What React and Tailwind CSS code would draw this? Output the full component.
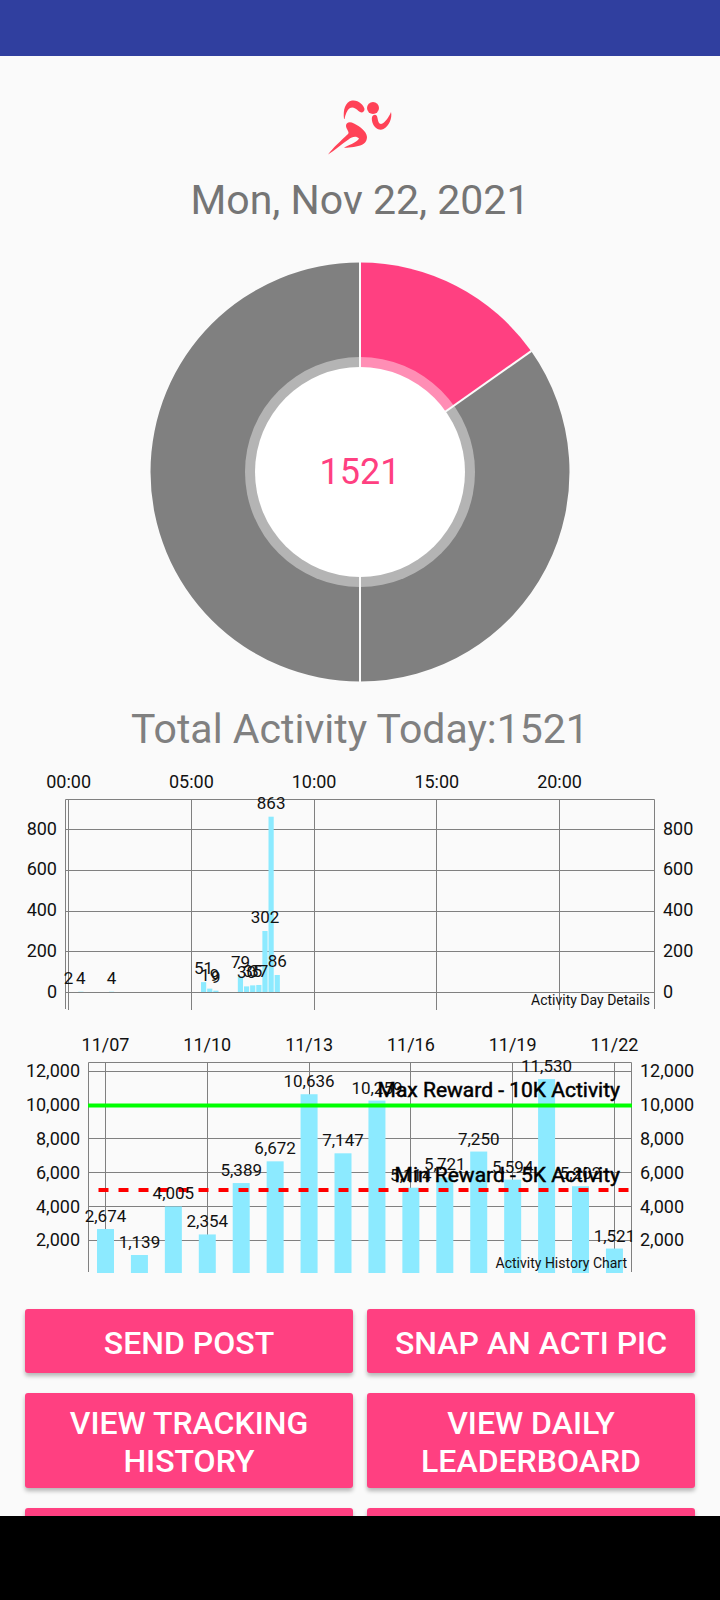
const INK = '#111111';
const GRID = '#808080';
const BAR = '#8ceaff';

const dayBars = [
  { slot: 0, value: 2 },
  { slot: 2, value: 4 },
  { slot: 7, value: 4 },
  { slot: 22, value: 51 },
  { slot: 23, value: 19 },
  { slot: 24, value: 9 },
  { slot: 28, value: 79 },
  { slot: 29, value: 30 },
  { slot: 30, value: 35 },
  { slot: 31, value: 37 },
  { slot: 32, value: 302 },
  { slot: 33, value: 863 },
  { slot: 34, value: 86 },
];

const history = [2674, 1139, 4005, 2354, 5389, 6672, 10636, 7147, 10259, 5114, 5721, 7250, 5594, 11530, 5202, 1521];

const actions = [
  { label: 'Send Post' },
  { label: 'Snap an Acti Pic' },
  { label: 'View Tracking History' },
  { label: 'View Daily Leaderboard' },
];

function RunnerLogo() {
  return (
    <svg viewBox="0 0 100 90" className="w-[100px] h-[90px] mx-auto" fill="#ff4257" role="img" aria-label="Runner">
      <circle cx="63" cy="28" r="6" />
      <path d="M34 39 C33 30 35 22 42 20.500 C48 19.500 54 25 54.500 29 C54.500 32.500 51 33.500 48.500 31 C45.500 28 42.500 26.500 40 28 C37 30 35.500 34 34.500 39 Z" />
      <path d="M62 37 C63.500 34 67 34 67.500 38 C68 41 69 44 71 44 C75 43 79 37 81 32 C82.500 38 79 46 73.500 49 C69 51 65 48 63 44 C62 41.500 61.500 39 62 37 Z" />
      <path d="M36 46 C36 42 40 41.500 44 43.500 C50 46.500 56.500 51 57 57 C57 63 52 65.500 46 66.500 C42 67.500 37 68 34 67.500 C38 65.500 47 62.500 49 58.500 C46 55.500 42 57 38.500 59.500 C32 64 25 70 18 74.500 C23 68 31 60.500 38 54 C40 52 36 49 36 46 Z" />
    </svg>
  );
}

// Angles are clockwise from twelve o'clock.
function slicePath(from, to, r) {
  const point = (deg) => {
    const rad = (deg * Math.PI) / 180;
    return `${r * Math.sin(rad)} ${-r * Math.cos(rad)}`;
  };
  return `M0 0 L${point(from)} A${r} ${r} 0 ${to - from > 180 ? 1 : 0} 1 ${point(to)} Z`;
}

function ActivityPie({ total }) {
  const end = (total / 10000) * 360;
  return (
    <svg viewBox="-360 -210 720 420" className="w-full" role="img" aria-label={`${total} of 10000 activity`}>
      <path d={slicePath(0, end, 209.5)} fill="#ff4081" />
      <path d={slicePath(end, 180, 209.5)} fill="#808080" />
      <path d={slicePath(180, 360, 209.5)} fill="#808080" />
      <circle r="115" fill="#fff" fillOpacity="0.41" />
      <g stroke="#fafafa" strokeWidth="2">
        {[0, end, 180].map((deg) => <path key={deg} d="M0 0 V-210" transform={`rotate(${deg})`} />)}
      </g>
      <circle r="105" fill="#fff" />
      <text y="12" textAnchor="middle" fontSize="36" fill="#ff4081">{total}</text>
    </svg>
  );
}

function DayChart() {
  const x = (slot) => 68.6 + slot * 6.137;
  const y = (value) => 223.5 - value * 0.2037;
  return (
    <svg viewBox="0 0 720 244" className="w-full" role="img" aria-label="Activity Day Details">
      <g stroke={GRID} fill="none" shapeRendering="crispEdges">
        {[0, 20, 40, 60, 80].map((s) => <path key={s} d={`M${Math.floor(x(s)) + 0.5} 30 V241`} />)}
        {[0, 200, 400, 600, 800].map((v) => <path key={v} d={`M65 ${Math.floor(y(v)) + 0.5} H655`} />)}
      </g>
      {dayBars.map((b) => (
        <rect key={b.slot} x={x(b.slot) - 2.6} y={y(b.value)} width="5.2" height={223 - y(b.value)} fill={BAR} />
      ))}
      <path d="M65.500 240 V30.500 H654.500 V240" stroke={GRID} fill="none" />
      <g fontSize="18" fill={INK}>
        {['00:00', '05:00', '10:00', '15:00', '20:00'].map((t, i) => (
          <text key={t} x={x(i * 20)} y="19" textAnchor="middle">{t}</text>
        ))}
        {[0, 200, 400, 600, 800].map((v) => (
          <g key={v}>
            <text x="57" y={y(v) + 5} textAnchor="end">{v}</text>
            <text x="663" y={y(v) + 5}>{v}</text>
          </g>
        ))}
      </g>
      <g fontSize="17" fill={INK} textAnchor="middle">
        {dayBars.map((b) => <text key={b.slot} x={x(b.slot)} y={y(b.value) - 8}>{b.value}</text>)}
      </g>
      <text x="650" y="236" fontSize="14" textAnchor="end" fill={INK}>Activity Day Details</text>
    </svg>
  );
}

function HistoryChart() {
  const x = (day) => 105.5 + day * 33.93;
  const y = (value) => 219.3 - value * 0.01693;
  const ticks = [2000, 4000, 6000, 8000, 10000, 12000];
  return (
    <svg viewBox="0 0 720 220" className="w-full overflow-visible" role="img" aria-label="Activity History Chart">
      <g stroke={GRID} fill="none" shapeRendering="crispEdges">
        {[0, 3, 6, 9, 12, 15].map((d) => <path key={d} d={`M${Math.floor(x(d)) + 0.5} 7 V218`} />)}
        {ticks.map((v) => <path key={v} d={`M88 ${Math.floor(y(v)) + 0.5} H632`} />)}
      </g>
      {history.map((v, i) => (
        <rect key={i} x={x(i) - 8.5} y={y(v)} width="17" height={218 - y(v)} fill={BAR} />
      ))}
      <path d="M88.500 217 V7.500 H631.500 V217" stroke={GRID} fill="none" />
      <path d="M88 50.500 H632" stroke="#00ff00" strokeWidth="4" />
      <path d="M98.500 135 H631" stroke="#ff0000" strokeWidth="4" strokeDasharray="10 10" />
      <g fontSize="18" fill={INK}>
        {['11/07', '11/10', '11/13', '11/16', '11/19', '11/22'].map((t, i) => (
          <text key={t} x={x(i * 3)} y="-4" textAnchor="middle">{t}</text>
        ))}
        {ticks.map((v) => (
          <g key={v}>
            <text x="80" y={y(v) + 6} textAnchor="end">{v.toLocaleString('en-US')}</text>
            <text x="640" y={y(v) + 6}>{v.toLocaleString('en-US')}</text>
          </g>
        ))}
      </g>
      <g fontSize="17" fill={INK} textAnchor="middle">
        {history.map((v, i) => <text key={i} x={x(i)} y={y(v) - 7}>{v.toLocaleString('en-US')}</text>)}
      </g>
      <g fontSize="21" fill="#000" stroke="#000" strokeWidth="0.5" textAnchor="end">
        <text x="620" y="42">Max Reward - 10K Activity</text>
        <text x="620" y="127">Min Reward - 5K Activity</text>
      </g>
      <text x="627" y="213" fontSize="14" textAnchor="end" fill={INK}>Activity History Chart</text>
    </svg>
  );
}

function ActionButton({ children, ...rest }) {
  return (
    <button
      type="button"
      className="min-h-16 px-6 pt-[11px] pb-2 rounded-[3px] bg-[#ff4081] text-white text-[32px] leading-[38px] font-medium uppercase shadow-[0_3px_4px_rgba(0,0,0,0.28)]"
      {...rest}
    >
      {children}
    </button>
  );
}

export default function App() {
  return (
    <div className="h-screen flex flex-col bg-[#fafafa] font-['Roboto',sans-serif]">
      <header className="h-14 shrink-0 bg-[#303f9f]" />

      <main className="flex-1 min-h-0 overflow-hidden">
        <div className="pt-6">
          <RunnerLogo />
        </div>
        <h1 className="mt-1 text-center text-[41px] leading-[52px] text-[#757575]">Mon, Nov 22, 2021</h1>
        <div className="mt-9">
          <ActivityPie total={1521} />
        </div>
        <h2 className="mt-[19px] text-center text-[41px] leading-[56px] text-[#808080]">Total Activity Today:1521</h2>
        <div className="mt-3">
          <DayChart />
        </div>
        <div className="mt-[42px]">
          <HistoryChart />
        </div>

        <div className="grid grid-cols-2 gap-x-3.5 gap-y-5 px-[25px] mt-[34px]">
          {actions.map((a) => <ActionButton key={a.label}>{a.label}</ActionButton>)}
          <ActionButton aria-label="Wallet" />
          <ActionButton aria-label="Settings" />
        </div>
      </main>

      <footer className="h-21 shrink-0 bg-black" />
    </div>
  );
}
